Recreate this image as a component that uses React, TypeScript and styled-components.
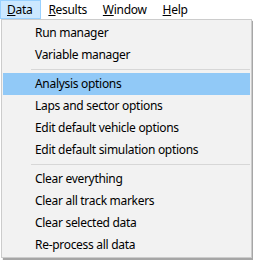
import React from 'react';
import styled, { createGlobalStyle } from 'styled-components';

const GlobalStyle = createGlobalStyle`
  html, body {
    margin: 0;
    padding: 0;
    background: #ffffff;
  }
  body {
    font-family: 'Noto Sans', 'Open Sans', sans-serif;
    font-size: 12px;
    letter-spacing: -0.3px;
    color: #000000;
  }
`;

const Window = styled.div`
  position: relative;
  width: 253px;
  height: 260px;
  overflow: hidden;
  background: #ffffff;
`;

const MenuBar = styled.div`
  display: flex;
  height: 19px;
  background: #ffffff;
`;

const BarItem = styled.div<{ $open?: boolean }>`
  display: flex;
  align-items: center;
  box-sizing: border-box;
  height: 19px;
  padding: 0 8px 1px 6px;
  border: 1px solid ${p => (p.$open ? '#99d1ff' : 'transparent')};
  background: ${p => (p.$open ? '#cce8ff' : 'transparent')};
  white-space: nowrap;
`;

const Popup = styled.div`
  position: absolute;
  left: 1px;
  top: 19px;
  width: 251px;
  box-sizing: border-box;
  padding: 2px 0 1px;
  background: #f2f2f2;
  border: 1px solid #cccccc;
  box-shadow: 2px 2px 1px rgba(0, 0, 0, 0.35);
`;

const Item = styled.div<{ $active?: boolean }>`
  display: flex;
  align-items: center;
  height: 22px;
  margin: 0 1px;
  padding: 0 0 1px 32px;
  box-sizing: border-box;
  background: ${p => (p.$active ? '#91c9f7' : 'transparent')};
  white-space: nowrap;
`;

const Separator = styled.div`
  height: 1px;
  margin: 3px 1px 3px 29px;
  background: #d7d7d7;
`;

type Entry = string | null;

const entries: { label: Entry; active?: boolean }[] = [
  { label: 'Run manager' },
  { label: 'Variable manager' },
  { label: null },
  { label: 'Analysis options', active: true },
  { label: 'Laps and sector options' },
  { label: 'Edit default vehicle options' },
  { label: 'Edit default simulation options' },
  { label: null },
  { label: 'Clear everything' },
  { label: 'Clear all track markers' },
  { label: 'Clear selected data' },
  { label: 'Re-process all data' },
];

const menus = ['Data', 'Results', 'Window', 'Help'];

export default function App() {
  return (
    <Window>
      <GlobalStyle />
      <MenuBar>
        {menus.map((m, i) => (
          <BarItem key={m} $open={i === 0}>
            <u>{m[0]}</u>
            {m.slice(1)}
          </BarItem>
        ))}
      </MenuBar>
      <Popup>
        {entries.map((e, i) =>
          e.label === null ? (
            <Separator key={i} />
          ) : (
            <Item key={i} $active={e.active}>
              {e.label}
            </Item>
          )
        )}
      </Popup>
    </Window>
  );
}
